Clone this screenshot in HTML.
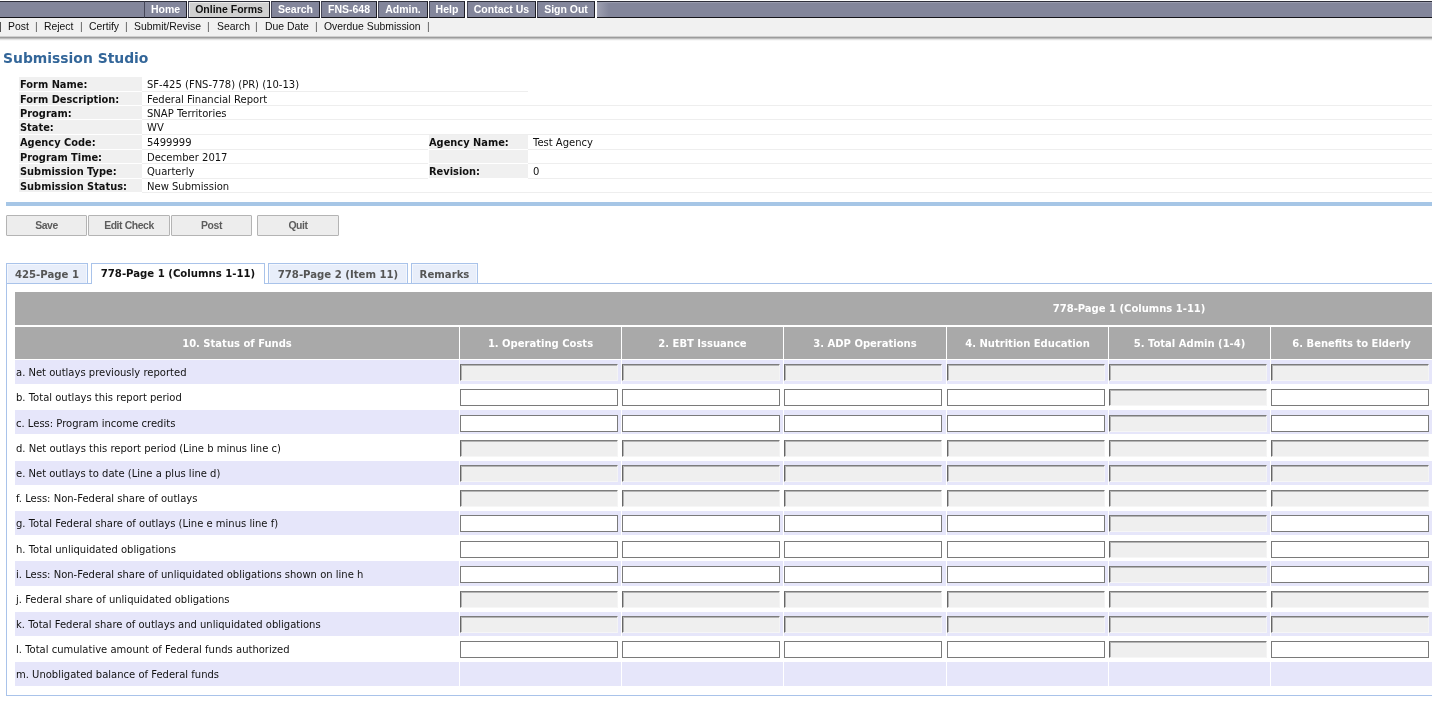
<!DOCTYPE html>
<html><head><meta charset="utf-8"><title>Submission Studio</title>
<style>
html,body{margin:0;padding:0;background:#fff;}
body{will-change:transform;}
body{width:1432px;height:701px;overflow:hidden;position:relative;font-family:"DejaVu Sans","Liberation Sans",sans-serif;font-size:10px;color:#111;}
#nav{position:absolute;left:0;top:0;width:1432px;height:18px;background:#fdfdfd;}
#nav a,#nav b{position:absolute;top:1px;height:17px;box-sizing:border-box;border:1px solid;border-color:#2e2f3b #1c1c24 #15151b #454658;background:#83869b;color:#fff;font:bold 10.5px/14px "Liberation Sans",sans-serif;text-align:center;text-decoration:none;white-space:nowrap;display:block;}
#nav b.r{background:linear-gradient(90deg,#9fa1b2 0,#83869b 12px);border-right:none;border-left:none;box-shadow:inset 0 1px 0 #9a9cae;}
#nav b.l{border-left:none;border-right:none;}
#nav a.sel{background:#d0d0d0;color:#111;box-shadow:inset 1px 1px 0 #e9e9e9;}
#sub{position:absolute;left:0;top:18px;width:1432px;height:18px;background:#f1f1f1;font:10.4px/17px "Liberation Sans",sans-serif;color:#111;}
#sub span,#sub i{position:absolute;top:0;white-space:nowrap;font-style:normal;}
#sub i{color:#555;}
#shadow{position:absolute;left:0;top:36px;width:1432px;height:5px;background:linear-gradient(#cfcfcf 0,#cfcfcf 1px,#9c9c9c 1px,#9c9c9c 2px,#bebebe 2px,#bebebe 3px,#e4e4e4 3px,#e4e4e4 4px,#f8f8f8 4px,#f8f8f8 5px);}
h1{position:absolute;left:3px;top:49px;margin:0;font:bold 13.9px/18px "DejaVu Sans",sans-serif;color:#336699;white-space:nowrap;}
#info{position:absolute;left:19px;top:77.3px;width:1413px;border-collapse:separate;border-spacing:0;font-size:10px;table-layout:fixed;}
#info td{height:11.5px;line-height:11.5px;padding:1.9px 0 0 5px;border-bottom:1px solid #eeeeee;white-space:nowrap;}
#info td.l{background:#f0f0f0;font-weight:bold;font-size:9.85px;border-bottom:1px solid #fff;padding-left:1px;}
#info tr.t td{height:12.2px;}
#info td.l2{padding-left:0;border-left:1px solid #fff;}
#info td.n{border-bottom:1px solid #fff;}
#rule{position:absolute;left:6px;top:202px;width:1426px;height:4px;background:#a6c6e6;}
.btn{position:absolute;top:215px;height:21px;box-sizing:border-box;border:1px solid #b4b4b4;background:#ededed;color:#5c5c5c;font:bold 10.4px/19px "Liberation Sans",sans-serif;letter-spacing:-0.4px;text-align:center;border-radius:1px;}
.tab{position:absolute;top:263px;height:20px;box-sizing:border-box;border:1px solid #a9c3ea;border-bottom:none;background:#e8eefa;box-shadow:inset 1px 1px 0 #f4f7fd,inset -1px 0 0 #f4f7fd;color:#555;font:bold 10.15px/21px "DejaVu Sans",sans-serif;text-align:center;white-space:nowrap;}
.tab.sel{background:#fff;color:#111;height:21px;z-index:2;line-height:19px;box-shadow:none;}
#panel{position:absolute;left:6px;top:283px;width:1440px;height:413px;box-sizing:border-box;border:1px solid #a9c3ea;}
#grid{position:absolute;left:15px;top:292px;width:2228px;border-collapse:separate;border-spacing:0;table-layout:fixed;font-size:10px;}
#grid th{background:#a9a9a9;color:#fff;font-weight:bold;font-size:10px;padding:0;border-right:1px solid #fff;white-space:nowrap;}
#grid tr.h1 th{height:33px;border-bottom:2px solid #fff;border-right:none;}
#grid tr.h2 th{height:32px;border-bottom:1px solid #fff;}
#grid td{padding:4px 0 0 0;border-right:1px solid #fff;border-bottom:1px solid #fff;vertical-align:top;box-sizing:border-box;line-height:16px;}
#grid tr.s td{background:#e6e6fa;}
#grid tr.dn td{padding-top:5px;}
#grid td.lab{padding-left:1px;white-space:nowrap;line-height:18px;}
#grid input{display:block;box-sizing:border-box;width:158px;height:17px;margin:0;padding:0;border:1px solid #7a7a7a;background:#fff;border-radius:0;outline:none;}
#grid input.d{background:#efefef;border-style:solid;border-color:#7c7c7c #f4f4f4 #f6f6f6 #666;border-width:1px;box-shadow:inset 1px 1px 0 #b4b4b4;}
</style></head><body>
<div id="nav">
<b class="l" style="left:0;width:144px"></b>
<a style="left:144px;width:43px">Home</a>
<a class="sel" style="left:188px;width:82px">Online Forms</a>
<a style="left:271px;width:49px">Search</a>
<a style="left:321px;width:56px">FNS-648</a>
<a style="left:378px;width:50px">Admin.</a>
<a style="left:429px;width:36px">Help</a>
<a style="left:467px;width:69px">Contact Us</a>
<a style="left:537px;width:58px">Sign Out</a>
<b class="r" style="left:597px;width:835px"></b>
</div>
<div id="sub"><i style="left:-1px;color:#222">|</i><span style="left:8px">Post</span><i style="left:35px">|</i><span style="left:44px">Reject</span><i style="left:80px">|</i><span style="left:89px">Certify</span><i style="left:125px">|</i><span style="left:134px">Submit/Revise</span><i style="left:207px">|</i><span style="left:217px">Search</span><i style="left:255px">|</i><span style="left:265px">Due Date</span><i style="left:315px">|</i><span style="left:324px">Overdue Submission</span><i style="left:427px">|</i></div>
<div id="shadow"></div>
<h1>Submission Studio</h1>
<table id="info" cellspacing="0" cellpadding="0">
<colgroup><col style="width:123px"><col style="width:286px"><col style="width:100px"><col></colgroup>
<tr><td class="l">Form Name:</td><td colspan="2">SF-425 (FNS-778) (PR) (10-13)</td><td class="n"></td></tr>
<tr><td class="l">Form Description:</td><td colspan="3">Federal Financial Report</td></tr>
<tr><td class="l">Program:</td><td colspan="3">SNAP Territories</td></tr>
<tr><td class="l">State:</td><td colspan="3">WV</td></tr>
<tr class="t"><td class="l">Agency Code:</td><td>5499999</td><td class="l l2">Agency Name:</td><td>Test Agency</td></tr>
<tr><td class="l">Program Time:</td><td>December 2017</td><td class="l l2"></td><td></td></tr>
<tr><td class="l">Submission Type:</td><td>Quarterly</td><td class="l l2">Revision:</td><td>0</td></tr>
<tr><td class="l">Submission Status:</td><td colspan="3">New Submission</td></tr>
</table>
<div id="rule"></div>
<div class="btn" style="left:6px;width:81px">Save</div>
<div class="btn" style="left:88px;width:82px">Edit Check</div>
<div class="btn" style="left:171px;width:81px">Post</div>
<div class="btn" style="left:257px;width:82px">Quit</div>
<div class="tab" style="left:6px;width:82px">425-Page 1</div>
<div class="tab sel" style="left:91px;width:174px">778-Page 1 (Columns 1-11)</div>
<div class="tab" style="left:268px;width:140px">778-Page 2 (Item 11)</div>
<div class="tab" style="left:411px;width:67px">Remarks</div>
<div id="panel"></div>
<table id="grid" cellspacing="0" cellpadding="0">
<colgroup><col style="width:445px"><col style="width:162px"><col style="width:162px"><col style="width:163px"><col style="width:162px"><col style="width:162px"><col style="width:162px"><col style="width:162px"><col style="width:162px"><col style="width:162px"><col style="width:162px"><col style="width:162px"></colgroup>
<tr class="h1"><th colspan="12">778-Page 1 (Columns 1-11)</th></tr>
<tr class="h2"><th>10. Status of Funds</th><th>1. Operating Costs</th><th>2. EBT Issuance</th><th>3. ADP Operations</th><th>4. Nutrition Education</th><th>5. Total Admin (1-4)</th><th>6. Benefits to Elderly</th><th>7. Benefits to Others</th><th>8. Total Benefits (6-7)</th><th>9. Other Costs</th><th>10. Wage Subsidy</th><th>11. Total (5+8+9+10)</th></tr>
<tr class="s" style="height:25px"><td class="lab">a. Net outlays previously reported</td><td><input class="d" type="text" disabled></td><td><input class="d" type="text" disabled></td><td><input class="d" type="text" disabled></td><td><input class="d" type="text" disabled></td><td><input class="d" type="text" disabled></td><td><input class="d" type="text" disabled></td><td><input class="d" type="text" disabled></td><td><input class="d" type="text" disabled></td><td><input class="d" type="text" disabled></td><td><input class="d" type="text" disabled></td><td><input class="d" type="text" disabled></td></tr>
<tr style="height:25px"><td class="lab">b. Total outlays this report period</td><td><input type="text"></td><td><input type="text"></td><td><input type="text"></td><td><input type="text"></td><td><input class="d" type="text" disabled></td><td><input type="text"></td><td><input type="text"></td><td><input type="text"></td><td><input type="text"></td><td><input type="text"></td><td><input class="d" type="text" disabled></td></tr>
<tr class="s dn" style="height:25px"><td class="lab">c. Less: Program income credits</td><td><input type="text"></td><td><input type="text"></td><td><input type="text"></td><td><input type="text"></td><td><input class="d" type="text" disabled></td><td><input type="text"></td><td><input type="text"></td><td><input type="text"></td><td><input type="text"></td><td><input type="text"></td><td><input class="d" type="text" disabled></td></tr>
<tr class="dn" style="height:26px"><td class="lab">d. Net outlays this report period (Line b minus line c)</td><td><input class="d" type="text" disabled></td><td><input class="d" type="text" disabled></td><td><input class="d" type="text" disabled></td><td><input class="d" type="text" disabled></td><td><input class="d" type="text" disabled></td><td><input class="d" type="text" disabled></td><td><input class="d" type="text" disabled></td><td><input class="d" type="text" disabled></td><td><input class="d" type="text" disabled></td><td><input class="d" type="text" disabled></td><td><input class="d" type="text" disabled></td></tr>
<tr class="s" style="height:25px"><td class="lab">e. Net outlays to date (Line a plus line d)</td><td><input class="d" type="text" disabled></td><td><input class="d" type="text" disabled></td><td><input class="d" type="text" disabled></td><td><input class="d" type="text" disabled></td><td><input class="d" type="text" disabled></td><td><input class="d" type="text" disabled></td><td><input class="d" type="text" disabled></td><td><input class="d" type="text" disabled></td><td><input class="d" type="text" disabled></td><td><input class="d" type="text" disabled></td><td><input class="d" type="text" disabled></td></tr>
<tr style="height:25px"><td class="lab">f. Less: Non-Federal share of outlays</td><td><input class="d" type="text" disabled></td><td><input class="d" type="text" disabled></td><td><input class="d" type="text" disabled></td><td><input class="d" type="text" disabled></td><td><input class="d" type="text" disabled></td><td><input class="d" type="text" disabled></td><td><input class="d" type="text" disabled></td><td><input class="d" type="text" disabled></td><td><input class="d" type="text" disabled></td><td><input class="d" type="text" disabled></td><td><input class="d" type="text" disabled></td></tr>
<tr class="s" style="height:25px"><td class="lab">g. Total Federal share of outlays (Line e minus line f)</td><td><input type="text"></td><td><input type="text"></td><td><input type="text"></td><td><input type="text"></td><td><input class="d" type="text" disabled></td><td><input type="text"></td><td><input type="text"></td><td><input type="text"></td><td><input type="text"></td><td><input type="text"></td><td><input class="d" type="text" disabled></td></tr>
<tr class="dn" style="height:25px"><td class="lab">h. Total unliquidated obligations</td><td><input type="text"></td><td><input type="text"></td><td><input type="text"></td><td><input type="text"></td><td><input class="d" type="text" disabled></td><td><input type="text"></td><td><input type="text"></td><td><input type="text"></td><td><input type="text"></td><td><input type="text"></td><td><input class="d" type="text" disabled></td></tr>
<tr class="s dn" style="height:26px"><td class="lab">i. Less: Non-Federal share of unliquidated obligations shown on line h</td><td><input type="text"></td><td><input type="text"></td><td><input type="text"></td><td><input type="text"></td><td><input class="d" type="text" disabled></td><td><input type="text"></td><td><input type="text"></td><td><input type="text"></td><td><input type="text"></td><td><input type="text"></td><td><input class="d" type="text" disabled></td></tr>
<tr style="height:25px"><td class="lab">j. Federal share of unliquidated obligations</td><td><input class="d" type="text" disabled></td><td><input class="d" type="text" disabled></td><td><input class="d" type="text" disabled></td><td><input class="d" type="text" disabled></td><td><input class="d" type="text" disabled></td><td><input class="d" type="text" disabled></td><td><input class="d" type="text" disabled></td><td><input class="d" type="text" disabled></td><td><input class="d" type="text" disabled></td><td><input class="d" type="text" disabled></td><td><input class="d" type="text" disabled></td></tr>
<tr class="s" style="height:25px"><td class="lab">k. Total Federal share of outlays and unliquidated obligations</td><td><input class="d" type="text" disabled></td><td><input class="d" type="text" disabled></td><td><input class="d" type="text" disabled></td><td><input class="d" type="text" disabled></td><td><input class="d" type="text" disabled></td><td><input class="d" type="text" disabled></td><td><input class="d" type="text" disabled></td><td><input class="d" type="text" disabled></td><td><input class="d" type="text" disabled></td><td><input class="d" type="text" disabled></td><td><input class="d" type="text" disabled></td></tr>
<tr style="height:25px"><td class="lab">l. Total cumulative amount of Federal funds authorized</td><td><input type="text"></td><td><input type="text"></td><td><input type="text"></td><td><input type="text"></td><td><input class="d" type="text" disabled></td><td><input type="text"></td><td><input type="text"></td><td><input type="text"></td><td><input type="text"></td><td><input type="text"></td><td><input class="d" type="text" disabled></td></tr>
<tr class="s" style="height:25px"><td class="lab">m. Unobligated balance of Federal funds</td><td></td><td></td><td></td><td></td><td></td><td></td><td></td><td></td><td></td><td></td><td></td></tr>
</table>
</body></html>
